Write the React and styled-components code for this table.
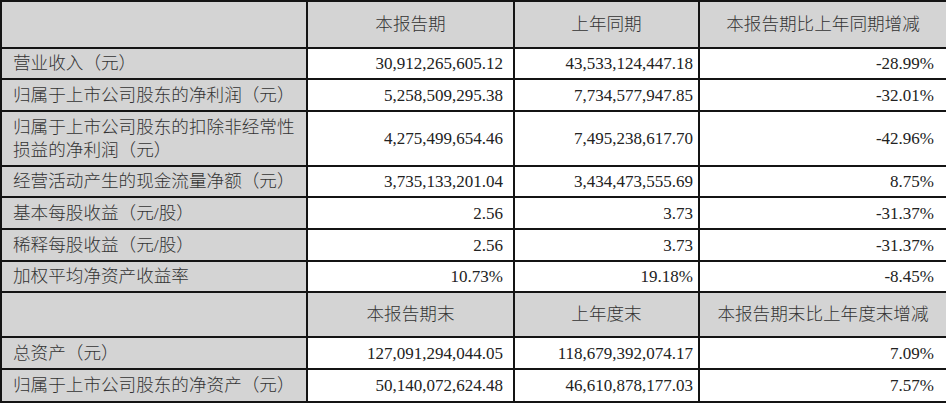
import React from "react";
import styled, { createGlobalStyle } from "styled-components";

const Global = createGlobalStyle`
  html, body { margin: 0; padding: 0; background: #ffffff; }
  body { font-family: "Liberation Serif", "Noto Sans CJK SC", serif; }
`;

const Table = styled.table`
  width: 946px;
  border-collapse: collapse;
  table-layout: fixed;
  font-size: 17px;
  line-height: 23px;
  color: #222222;
`;

const Row = styled.tr`
  height: ${(p) => p.$h}px;
  background: ${(p) => (p.$head ? "#d4d4d4" : "#ffffff")};
`;

const Cell = styled.td`
  border: 2px solid #141414;
  padding: 0 ${(p) => p.$pr ?? 10}px 0 ${(p) => p.$pl ?? 0}px;
  text-align: ${(p) => p.$align || "right"};
  vertical-align: middle;
  white-space: nowrap;
  background: ${(p) => (p.$gray ? "#d4d4d4" : "transparent")};
`;

const LabelCell = styled(Cell).attrs({ $align: "left", $gray: true, $pl: 11 })`
  font-size: 17.6px;
  font-weight: 300;
  color: #333333;
`;

const HeadCell = styled(Cell).attrs({ $align: "center", $pr: 0 })`
  font-size: 17.6px;
  font-weight: 300;
  color: #333333;
`;

const cols = [306, 207, 185, 248];
const pads = [0, 10, 5, 12];

const upper = [
  { label: "营业收入（元）", v: ["30,912,265,605.12", "43,533,124,447.18", "-28.99%"], h: 31 },
  { label: "归属于上市公司股东的净利润（元）", v: ["5,258,509,295.38", "7,734,577,947.85", "-32.01%"], h: 32 },
  {
    label: ["归属于上市公司股东的扣除非经常性", "损益的净利润（元）"],
    v: ["4,275,499,654.46", "7,495,238,617.70", "-42.96%"],
    h: 55,
  },
  { label: "经营活动产生的现金流量净额（元）", v: ["3,735,133,201.04", "3,434,473,555.69", "8.75%"], h: 31 },
  { label: "基本每股收益（元/股）", v: ["2.56", "3.73", "-31.37%"], h: 32 },
  { label: "稀释每股收益（元/股）", v: ["2.56", "3.73", "-31.37%"], h: 32 },
  { label: "加权平均净资产收益率", v: ["10.73%", "19.18%", "-8.45%"], h: 31 },
];

const lower = [
  { label: "总资产（元）", v: ["127,091,294,044.05", "118,679,392,074.17", "7.09%"], h: 32 },
  { label: "归属于上市公司股东的净资产（元）", v: ["50,140,072,624.48", "46,610,878,177.03", "7.57%"], h: 33 },
];

function DataRow({ r }) {
  return (
    <Row $h={r.h}>
      <LabelCell>
        {Array.isArray(r.label)
          ? r.label.map((l, i) => (
              <React.Fragment key={i}>
                {i > 0 && <br />}
                {l}
              </React.Fragment>
            ))
          : r.label}
      </LabelCell>
      {r.v.map((x, i) => (
        <Cell key={i} $pr={pads[i + 1]}>
          {x}
        </Cell>
      ))}
    </Row>
  );
}

function HeadRow({ h, titles }) {
  return (
    <Row $head $h={h}>
      <HeadCell />
      {titles.map((t) => (
        <HeadCell key={t}>{t}</HeadCell>
      ))}
    </Row>
  );
}

export default function App() {
  return (
    <>
      <Global />
      <Table>
        <colgroup>
          {cols.map((w, i) => (
            <col key={i} style={{ width: w }} />
          ))}
        </colgroup>
        <tbody>
          <HeadRow h={47} titles={["本报告期", "上年同期", "本报告期比上年同期增减"]} />
          {upper.map((r, i) => (
            <DataRow key={i} r={r} />
          ))}
          <HeadRow h={45} titles={["本报告期末", "上年度末", "本报告期末比上年度末增减"]} />
          {lower.map((r, i) => (
            <DataRow key={i} r={r} />
          ))}
        </tbody>
      </Table>
    </>
  );
}
